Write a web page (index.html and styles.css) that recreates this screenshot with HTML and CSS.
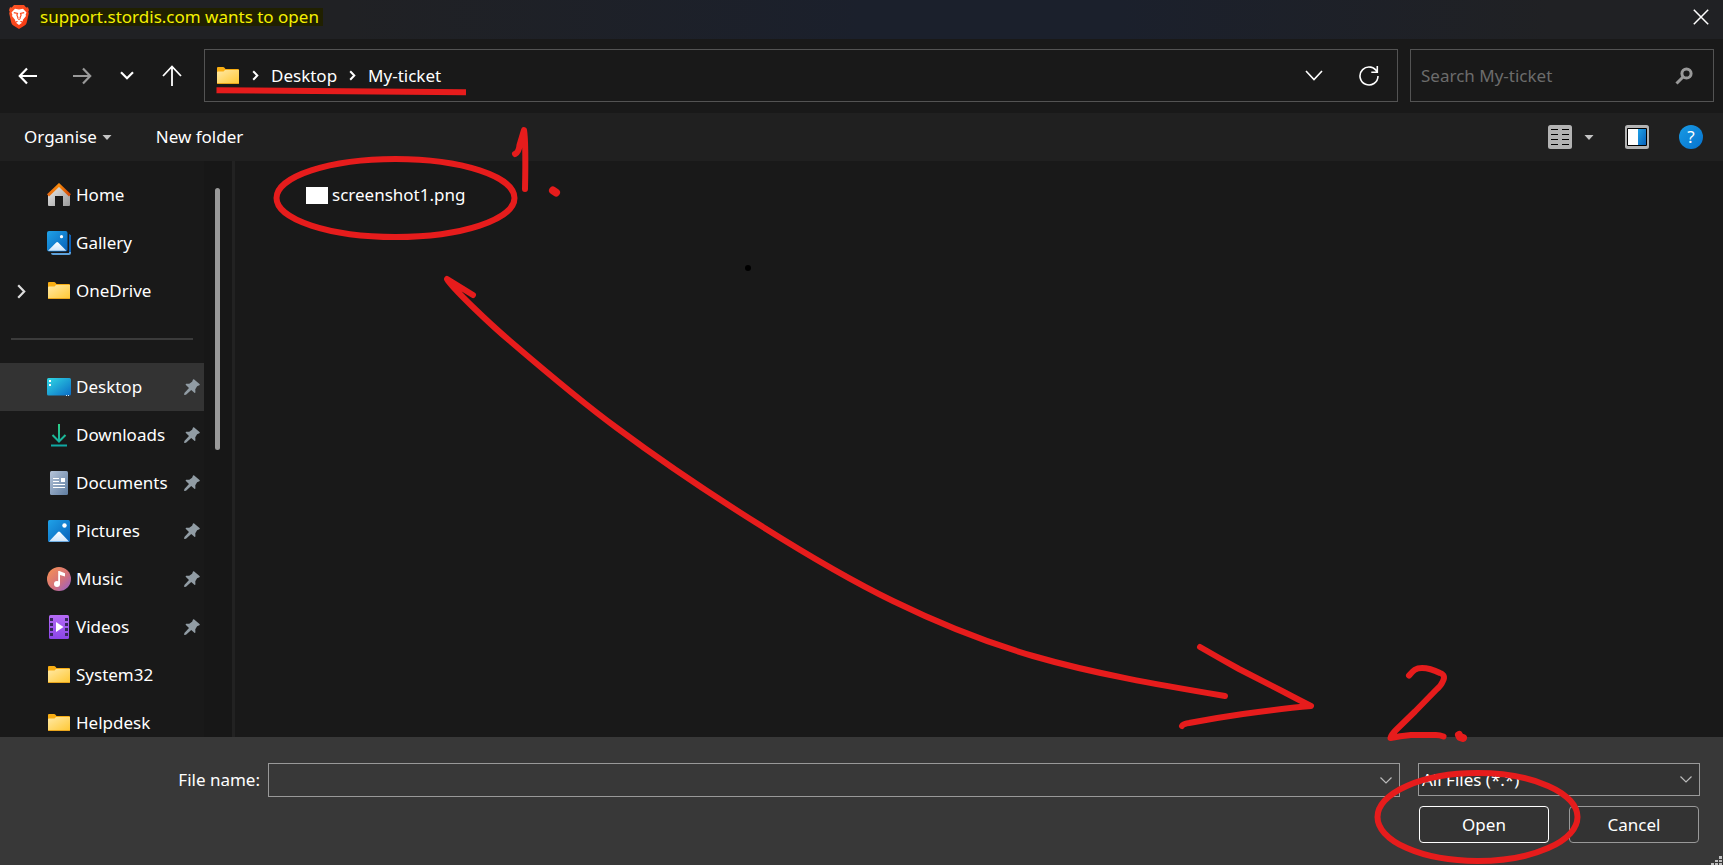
FILE: index.html
```html
<!DOCTYPE html>
<html lang="en-GB">
<head>
<meta charset="utf-8">
<title>Open file</title>
<link rel="stylesheet" href="styles.css">
</head>
<body>
<svg class="defs" aria-hidden="true">
  <defs>
    <linearGradient id="gFolder" x1="0" y1="0" x2="1" y2="1"><stop offset="0" stop-color="#ffe9a6"/><stop offset="1" stop-color="#ffc937"/></linearGradient>
    <linearGradient id="gBlue" x1="0" y1="0" x2="1" y2="1"><stop offset="0" stop-color="#1fa2e8"/><stop offset="1" stop-color="#0760b8"/></linearGradient>
    <linearGradient id="gSnow" x1="0" y1="0" x2="0" y2="1"><stop offset="0" stop-color="#fff"/><stop offset="1" stop-color="#cfe6fb"/></linearGradient>
    <linearGradient id="gHouse" x1="0" y1="0" x2="1" y2="1"><stop offset="0" stop-color="#eee"/><stop offset="1" stop-color="#999"/></linearGradient>
    <linearGradient id="gRoof" x1="0" y1="0" x2="1" y2="0"><stop offset="0" stop-color="#e86a12"/><stop offset=".5" stop-color="#f98b0c"/><stop offset="1" stop-color="#cf4509"/></linearGradient>
    <linearGradient id="gDesk" x1="0" y1="0" x2="1" y2="1"><stop offset="0" stop-color="#30d8e4"/><stop offset="1" stop-color="#0b6cc6"/></linearGradient>
    <linearGradient id="gDown" x1="0" y1="0" x2="0" y2="1"><stop offset="0" stop-color="#2fcf86"/><stop offset="1" stop-color="#0fa8a4"/></linearGradient>
    <linearGradient id="gDoc" x1="0" y1="0" x2="1" y2="1"><stop offset="0" stop-color="#b6c5da"/><stop offset="1" stop-color="#5f7da0"/></linearGradient>
    <linearGradient id="gMusic" x1="0" y1="0" x2="1" y2="1"><stop offset=".1" stop-color="#f48e57"/><stop offset=".6" stop-color="#cf6f80"/><stop offset="1" stop-color="#8f5fd0"/></linearGradient>
    <linearGradient id="gVideo" x1="0" y1="0" x2="0" y2="1"><stop offset="0" stop-color="#b56bf5"/><stop offset="1" stop-color="#8a45e6"/></linearGradient>
    <linearGradient id="gBrave" x1="0" y1="0" x2="1" y2="1"><stop offset="0" stop-color="#ff5a2a"/><stop offset="1" stop-color="#f5350f"/></linearGradient>
    <symbol id="folder" viewBox="0 0 24 24"><path d="M1 4q0-1 1-1h5q1 0 1.500.7L9.500 5H22q1 0 1 1v4H1z" fill="#f9ae13"/><path d="M1 8.500Q1 7.600 2 7.500l5.500-.1L9 6h14v13H1z" fill="url(#gFolder)"/><path d="M1 19h22v.4q0 .6-.6.600H1.600Q1 20 1 19.400z" fill="#e9a51d"/></symbol>
    <symbol id="pin" viewBox="0 0 16 16"><path d="M9 .4Q9.600-.1 10.200.5l5.300 4.600q.6.700-.1 1.200l-2.300 1-1.800 2.900.1 3q-.1 1.200-1 .5L7.200 10.900 2 15.700.1 16l.3-1.900L5 9.100 1.900 5.900q-.7-.9.400-1.100l3-.1 2.800-2z" fill="#919ca4"/></symbol>
    <symbol id="crumb" viewBox="0 0 7 11"><path d="M1.200 1.200l4.100 4.300-4.100 4.300" fill="none" stroke="#fff" stroke-width="2"/></symbol>
    <symbol id="combo" viewBox="0 0 12 7"><path d="M.5.500L6 6 11.500.5" fill="none" stroke="#bbb" stroke-width="1.200"/></symbol>
    <symbol id="caret" viewBox="0 0 10 5"><path d="M.5 0h9L5 5z" fill="#c4c4c4"/></symbol>
  </defs>
</svg>

<header class="titlebar">
  <svg class="brave" viewBox="0 0 20 24" aria-hidden="true"><path d="M5 0h10l2.200 2.400L19 2.200l1 3-.7 1.300.5 2-2.200 9.500q-.5 1.600-2 2.600L10 24l-5.600-3.400q-1.500-1-2-2.600L.2 8.500l.5-2L0 5.200l1-3 1.800.2z" fill="url(#gBrave)"/><path d="M6 3.700l4 .7 4-.7 3.500 3.800-.9 2.200.4 1.200-3.200 4 .1 1.700-1.900-.6L10 17.300 8 16l-1.900.6.100-1.700L3 10.900l.4-1.200-.9-2.200z" fill="#fff"/><path d="M4.800 7.600l3.700.9-.6 1.600 1 2.500-.3 1.100M15.200 7.600l-3.700.9.600 1.600-1 2.500.3 1.100" fill="none" stroke="#fb4a20" stroke-width="1.200"/><path d="M8.500 13.800h3L10 15.200z" fill="#fb4a20"/><path d="M7 17.700l3-1.700 3 1.700-3 2.200z" fill="#fff"/></svg>
  <h1 class="title"><mark>support.stordis.com wants to open</mark></h1>
  <button class="icon-btn close" aria-label="Close"><svg width="16" height="16" viewBox="0 0 16 16"><path d="M.8.8l14.400 14.400M15.200.8L.8 15.200" stroke="#fff" stroke-width="1.500"/></svg></button>
</header>

<nav class="navbar" aria-label="Navigation">
  <div class="nav-buttons">
    <button class="icon-btn" aria-label="Back"><svg width="20" height="18" viewBox="0 0 20 18"><path d="M19 9H2M9 1.500L1.800 9 9 16.500" fill="none" stroke="#fff" stroke-width="2.200"/></svg></button>
    <button class="icon-btn" aria-label="Forward"><svg width="20" height="18" viewBox="0 0 20 18"><path d="M1 9h17M11 1.500L18.200 9 11 16.500" fill="none" stroke="#999" stroke-width="2.200"/></svg></button>
    <button class="icon-btn" aria-label="Recent locations"><svg width="14" height="9" viewBox="0 0 14 9"><path d="M1 1.200l6 6 6-6" fill="none" stroke="#fff" stroke-width="2.200"/></svg></button>
    <button class="icon-btn" aria-label="Up"><svg width="20" height="22" viewBox="0 0 20 22"><path d="M10 21V2M1 11l9-9.500 9 9.500" fill="none" stroke="#fff" stroke-width="1.800"/></svg></button>
  </div>
  <div class="address">
    <svg class="ico"><use href="#folder"/></svg>
    <svg class="crumb-sep"><use href="#crumb"/></svg>
    <a class="crumb" href="#desktop">Desktop</a>
    <svg class="crumb-sep"><use href="#crumb"/></svg>
    <a class="crumb" href="#my-ticket">My-ticket</a>
    <button class="icon-btn history" aria-label="Previous locations"><svg width="18" height="11" viewBox="0 0 18 11"><path d="M1 1l8 8.500L17 1" fill="none" stroke="#fff" stroke-width="1.600"/></svg></button>
    <button class="icon-btn" aria-label="Refresh"><svg width="20" height="21" viewBox="0 0 20 21"><path d="M18.300 7.500A9 9 0 1 0 19 11M18.300 1v6.200h-6" fill="none" stroke="#fff" stroke-width="1.600"/></svg></button>
  </div>
  <div class="search">
    <input class="search-input" type="text" aria-label="Search My-ticket" placeholder="Search My-ticket">
    <svg width="18" height="18" viewBox="0 0 18 18" aria-hidden="true"><circle cx="11.500" cy="6.500" r="4.600" fill="none" stroke="#999" stroke-width="3"/><path d="M8 10l-6.500 6.500" stroke="#999" stroke-width="3"/></svg>
  </div>
</nav>

<div class="toolbar">
  <button class="tool organise">Organise <svg class="caret"><use href="#caret"/></svg></button>
  <button class="tool">New folder</button>
  <div class="tools-right">
    <button class="icon-btn" aria-label="View"><svg width="24" height="24" viewBox="0 0 24 24"><rect width="24" height="24" rx="2.500" fill="#b3b3b3"/><path d="M3 4.500h7M14 4.500h7M3 9.500h7M14 9.500h7M3 14.500h7M14 14.500h7M3 19.500h7M14 19.500h7" stroke="#000"/></svg></button>
    <button class="icon-btn view-more" aria-label="More views"><svg class="caret"><use href="#caret"/></svg></button>
    <button class="icon-btn pane" aria-label="Preview pane"><svg width="24" height="24" viewBox="0 0 24 24"><rect width="24" height="24" rx="2.500" fill="#b3b3b3"/><rect x="2" y="3" width="20" height="18" rx="1" fill="#000"/><path d="M3 4h10v16H3z" fill="#fff"/><path d="M13 4h8v16h-8z" fill="url(#gBlue)"/></svg></button>
    <button class="icon-btn help" aria-label="Help">?</button>
  </div>
</div>

<main class="browser">
  <nav class="sidebar" aria-label="Folders">
    <ul class="tree">
      <li><a class="item" href="#home"><svg class="ico" viewBox="0 0 24 24"><path d="M1 12L12 2l11 10v10q0 1-1 1h-6V13H8v10H2q-1 0-1-1z" fill="url(#gHouse)"/><path d="M1 12.300L12 2l11 10.300" fill="none" stroke="url(#gRoof)" stroke-width="3"/></svg><span>Home</span></a></li>
      <li><a class="item" href="#gallery"><svg class="ico" viewBox="0 0 24 24"><path d="M22 3.500q2 0 2 2V22q0 2-2 2H6q-2 0-2-2h18z" fill="#5ea2dc"/><path d="M22 3.500q2 0 2 2V21h-2z" fill="#0c5fb5"/><rect width="20.500" height="20.500" rx="2" fill="url(#gBlue)"/><path d="M1 19.800l8.200-8.200q1-1 2 0l8.200 8.200z" fill="url(#gSnow)"/><circle cx="14.500" cy="5.700" r="1.600" fill="#fff"/></svg><span>Gallery</span></a></li>
      <li><a class="item" href="#onedrive"><svg class="expand" viewBox="0 0 9 15"><path d="M1.200 1.200l6 6.300-6 6.300" fill="none" stroke="#ddd" stroke-width="2.200"/></svg><svg class="ico"><use href="#folder"/></svg><span>OneDrive</span></a></li>
      <li class="divider"></li>
      <li><a class="item selected" href="#desktop"><svg class="ico" viewBox="0 0 24 24"><rect y="3" width="24" height="17.500" rx="1.500" fill="url(#gDesk)"/><path d="M2 5h2v2H2zM2 9h2v2H2z" fill="#fff"/><path d="M19 20h1v1h-1zM21 20h1v1h-1z" fill="#cfe6fb"/></svg><span>Desktop</span><svg class="pin"><use href="#pin"/></svg></a></li>
      <li><a class="item" href="#downloads"><svg class="ico" viewBox="0 0 24 24"><path d="M12 1v17M5.500 12l6.500 6.500 6.500-6.500M4 22.500h16" fill="none" stroke="url(#gDown)" stroke-width="2"/></svg><span>Downloads</span><svg class="pin"><use href="#pin"/></svg></a></li>
      <li><a class="item" href="#documents"><svg class="ico" viewBox="0 0 24 24"><rect x="3" width="18" height="24" rx="1.500" fill="url(#gDoc)"/><path d="M6 7.500h6M6 10.500h6M6 13.500h12M6 16.500h12" stroke="#fff" stroke-width="1.200"/><path d="M14 7h4v4h-4z" fill="#fff"/></svg><span>Documents</span><svg class="pin"><use href="#pin"/></svg></a></li>
      <li><a class="item" href="#pictures"><svg class="ico" viewBox="0 0 24 24"><rect x="1" y="1" width="22" height="22" rx="1.500" fill="url(#gBlue)"/><path d="M2 22.500l9-9.500q1-1 2 0l9 9.500z" fill="url(#gSnow)"/><circle cx="17.500" cy="6.500" r="2.200" fill="#fff"/></svg><span>Pictures</span><svg class="pin"><use href="#pin"/></svg></a></li>
      <li><a class="item" href="#music"><svg class="ico" viewBox="0 0 24 24"><circle cx="12" cy="12" r="12" fill="url(#gMusic)"/><circle cx="10" cy="17" r="3" fill="#fff"/><path d="M11.200 17V4h1.200l5.600 2.200v3.300l-5-1.600V17z" fill="#fff"/></svg><span>Music</span><svg class="pin"><use href="#pin"/></svg></a></li>
      <li><a class="item" href="#videos"><svg class="ico" viewBox="0 0 24 24"><rect x="2" width="20" height="24" rx="1.500" fill="url(#gVideo)"/><path d="M3 3h3v3H3zM3 8h3v3H3zM3 13h3v3H3zM3 18h3v3H3zM18 3h3v3h-3zM18 8h3v3h-3zM18 13h3v3h-3zM18 18h3v3h-3z" fill="#35265c"/><path d="M9 7l7.500 5L9 17z" fill="#fff"/></svg><span>Videos</span><svg class="pin"><use href="#pin"/></svg></a></li>
      <li><a class="item" href="#system32"><svg class="ico"><use href="#folder"/></svg><span>System32</span></a></li>
      <li><a class="item" href="#helpdesk"><svg class="ico"><use href="#folder"/></svg><span>Helpdesk</span></a></li>
    </ul>
    <div class="scroll-track"><div class="scroll-thumb"></div></div>
  </nav>
  <section class="files" aria-label="Files">
    <a class="file" href="#screenshot1"><span class="thumb"></span><span>screenshot1.png</span></a>
  </section>
</main>

<footer class="footer">
  <div class="name-row">
    <label class="name-label" for="filename">File name:</label>
    <div class="name-box">
      <input class="name-input" id="filename" type="text">
      <button class="icon-btn" aria-label="Recent file names"><svg class="combo"><use href="#combo"/></svg></button>
    </div>
    <div class="type-box">
      <select class="type-select" aria-label="File type"><option>All Files (*.*)</option></select>
      <svg class="combo"><use href="#combo"/></svg>
    </div>
  </div>
  <div class="actions">
    <button class="action primary">Open</button>
    <button class="action">Cancel</button>
  </div>
  <svg class="grip" viewBox="0 0 12 10" aria-hidden="true"><path d="M8 1h3v3H8zM4 5h3v2H4zM8 5h3v2H8zM0 8h3v2H0zM4 8h3v2H4zM8 8h3v2H8z" fill="#bdbdbd"/></svg>
</footer>

<svg class="ink" viewBox="0 0 1723 865" preserveAspectRatio="none" aria-hidden="true">
  <g fill="none" stroke="#e61c1c" stroke-width="6" stroke-linecap="round" stroke-linejoin="round">
    <path d="M216.500 90.300L466 92.300" stroke-linecap="butt"/>
    <ellipse cx="395.500" cy="198" rx="119" ry="39"/>
    <path d="M515 154Q519 152 519.500 145L524 130Q526 142 525 189"/>
    <path d="M553 190.500L556 192.500" stroke-width="8"/>
    <path d="M473 295L447 279C452 288 490 324 510 341C545 371 580 401 617 428C664 463 715 497 763 527C806 554 850 580 893 601C940 624 985 642 1033 656C1095 674 1160 685 1225 696"/>
    <path d="M1200 647Q1219 658 1239 669L1282 691Q1301 701 1311 706C1288 708 1265 711 1243 714Q1215 718 1189 723Q1183 724 1182 726"/>
    <path d="M1409 675.500C1413 671 1415 668 1422 668Q1430 668 1440 673Q1446 675 1443 681Q1441 686 1436 690L1415 711.500L1396 730Q1391 735 1390.500 738Q1400 736 1411 735H1436Q1440 735 1443.500 736.500"/>
    <path d="M1459 735L1460 737L1463 738" stroke-width="8"/>
    <ellipse cx="1477.500" cy="817" rx="100" ry="44"/>
  </g>
  <circle cx="748" cy="268" r="3"/>
</svg>
</body>
</html>
```
FILE: styles.css
```css
* { box-sizing: border-box; }

body {
  margin: 0;
  height: 100vh;
  display: flex;
  flex-direction: column;
  position: relative;
  overflow: hidden;
  background: #191919;
  color: #fff;
  font: 17px/24px "Noto Sans", "Open Sans", sans-serif;
}

button, input, select {
  font: inherit;
  color: inherit;
}

a { color: inherit; text-decoration: none; }
svg { display: block; flex: none; }
.defs { position: absolute; width: 0; height: 0; }

.icon-btn {
  display: flex;
  align-items: center;
  justify-content: center;
  padding: 0;
  border: 0;
  background: none;
}

.ico { width: 24px; height: 24px; }
.caret { width: 10px; height: 5px; }
.combo { width: 12px; height: 7px; }

.titlebar {
  display: flex;
  align-items: center;
  flex: none;
  height: 39px;
  padding: 0 14px 6px 9px;
  background: linear-gradient(90deg, #202124 20%, #1b202c 50%, #1b202c 65%, #202124 90%);
}

.brave { width: 20px; height: 24px; }

.title {
  margin: 0 0 0 11px;
  font-size: 17px;
  font-weight: 400;
  line-height: 18px;
}

.title mark {
  display: block;
  padding-right: 4px;
  background: #202000;
  color: #f4f000;
}

.close { margin-left: auto; }

.navbar {
  display: flex;
  align-items: center;
  flex: none;
  height: 74px;
  padding: 0 9px 1px 0;
  gap: 12px;
}

.nav-buttons {
  display: flex;
  align-items: center;
  gap: 28px;
  width: 192px;
  padding-left: 18px;
}

.nav-buttons .icon-btn:first-child { margin-right: 6px; }

.address {
  flex: 1;
  display: flex;
  align-items: center;
  gap: 12px;
  height: 53px;
  padding: 0 18px 0 11px;
  border: 1px solid #535353;
}

.crumb-sep { width: 7px; height: 11px; }
.history { margin: 0 24px 0 auto; }

.search {
  display: flex;
  align-items: center;
  width: 304px;
  height: 53px;
  padding: 0 20px 0 10px;
  border: 1px solid #535353;
}

.search-input {
  flex: 1;
  min-width: 0;
  padding: 0;
  border: 0;
  outline: 0;
  background: none;
}

.search-input::placeholder { color: #6c6c6c; opacity: 1; }

.toolbar {
  display: flex;
  align-items: center;
  flex: none;
  height: 48px;
  padding: 0 20px 0 24px;
  background: #202020;
}

.tool {
  display: flex;
  align-items: center;
  gap: 5px;
  padding: 0;
  border: 0;
  background: none;
}

.organise { margin-right: 44px; }

.tools-right {
  display: flex;
  align-items: center;
  margin-left: auto;
}

.view-more { margin: 0 31px 0 12px; }
.pane { margin-right: 30px; }

.help {
  width: 24px;
  height: 24px;
  border-radius: 50%;
  background: linear-gradient(135deg, #189be4, #0672cf);
}

.browser {
  display: flex;
  flex: 1;
  min-height: 0;
  overflow: hidden;
}

.sidebar {
  display: flex;
  flex: none;
  width: 235px;
  border-right: 3px solid #222;
}

.tree {
  width: 204px;
  margin: 0;
  padding: 10px 0 0;
  list-style: none;
}

.item {
  display: flex;
  align-items: center;
  gap: 5px;
  height: 48px;
  padding: 0 4px 0 47px;
  position: relative;
}

.item.selected { background: #333; }
.expand { position: absolute; left: 17px; width: 9px; height: 15px; }
.pin { width: 16px; height: 16px; margin-left: auto; }

.divider {
  height: 2px;
  margin: 23px 11px;
  background: #3b3b3b;
}

.scroll-track {
  flex: 1;
  padding: 27px 0 0 11px;
  background: #171717;
}

.scroll-thumb {
  width: 5px;
  height: 262px;
  border-radius: 3px;
  background: #999;
}

.files { flex: 1; padding: 22px 71px; }

.file {
  display: inline-flex;
  align-items: center;
  gap: 4px;
}

.thumb { width: 22px; height: 17px; background: #fff; }

.footer {
  flex: none;
  position: relative;
  padding: 26px 23px 22px 0;
  background: #383838;
}

.name-row { display: flex; align-items: flex-start; }

.name-label {
  width: 268px;
  padding-right: 8px;
  line-height: 34px;
  text-align: right;
}

.name-box {
  flex: 1;
  display: flex;
  height: 34px;
  margin-right: 18px;
  padding-right: 7px;
  border: 1px solid #999;
}

.name-input {
  flex: 1;
  min-width: 0;
  border: 0;
  outline: 0;
  background: none;
}

.type-box {
  display: grid;
  align-items: center;
  width: 282px;
  height: 33px;
  border: 1px solid #999;
  background: #333;
}

.type-box > * { grid-area: 1 / 1; }
.type-box .combo { justify-self: end; margin-right: 7px; pointer-events: none; }

.type-select {
  width: 100%;
  height: 100%;
  padding: 0 3px;
  border: 0;
  appearance: none;
  background: none;
}

.actions {
  display: flex;
  justify-content: flex-end;
  gap: 20px;
  margin-top: 9px;
  padding-right: 1px;
}

.action {
  width: 130px;
  height: 37px;
  padding: 0;
  border: 1px solid #999;
  border-radius: 4px;
  background: #333;
}

.action.primary { border-color: #fff; }

.grip {
  position: absolute;
  right: 0;
  bottom: 0;
  width: 12px;
  height: 10px;
}

.ink {
  position: absolute;
  inset: 0;
  width: 100%;
  height: 100%;
  pointer-events: none;
}
```
